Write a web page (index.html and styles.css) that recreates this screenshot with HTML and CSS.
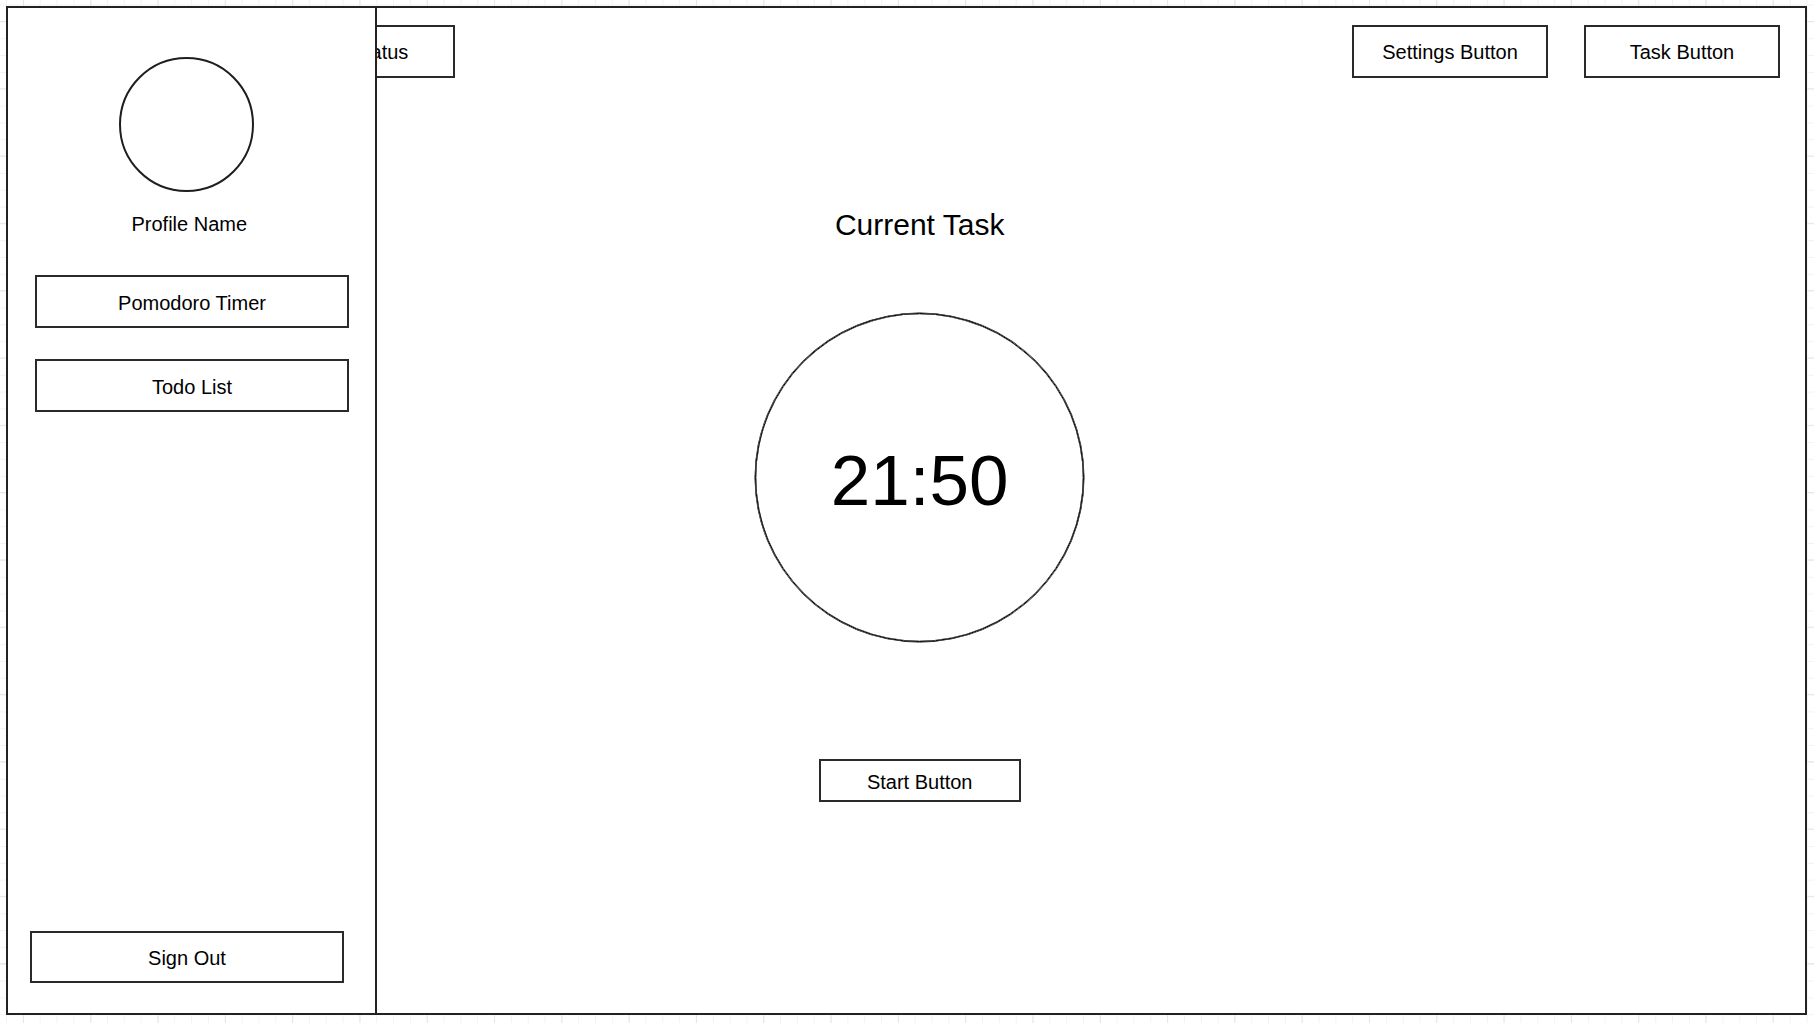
FILE: index.html
```html
<!DOCTYPE html>
<html lang="en">
<head>
<meta charset="utf-8">
<title>Pomodoro Timer</title>
<link rel="stylesheet" href="styles.css">
</head>
<body>
<div class="frame">
  <aside class="sidebar">
    <div class="avatar"></div>
    <div class="profile-name">Profile Name</div>
    <button class="box low-text nav-btn nav-first">Pomodoro Timer</button>
    <button class="box low-text nav-btn nav-second">Todo List</button>
    <button class="box low-text signout-btn">Sign Out</button>
  </aside>
  <main class="main">
    <header class="topbar">
      <button class="box top-btn status-btn">Status</button>
      <div class="spacer"></div>
      <button class="box top-btn">Settings Button</button>
      <button class="box top-btn task-btn">Task Button</button>
    </header>
    <section class="stage">
      <h1 class="task-title">Current Task</h1>
      <div class="timer"><span class="timer-text">21:50</span></div>
      <button class="box low-text start-btn">Start Button</button>
    </section>
  </main>
</div>
</body>
</html>
```

FILE: styles.css
```css
html, body {
  margin: 0;
  padding: 0;
}

body {
  width: 1814px;
  height: 1023px;
  overflow: hidden;
  font-family: "Liberation Sans", Arial, Helvetica, sans-serif;
  color: #000;
  background-color: #fff;
  background-image:
    linear-gradient(to right, #e6e6e6 1px, transparent 1px),
    linear-gradient(to bottom, #e6e6e6 1px, transparent 1px),
    linear-gradient(to right, #f2f2f2 1px, transparent 1px),
    linear-gradient(to bottom, #f2f2f2 1px, transparent 1px);
  background-size: 67.3px 67.3px, 67.3px 67.3px, 16.83px 16.83px, 16.83px 16.83px;
  background-position: 23px 0, 0 21px, 6px 0, 0 4.6px;
}

.frame {
  position: relative;
  box-sizing: border-box;
  margin: 6px 0 0 6px;
  width: 1801px;
  height: 1009px;
  border: 2px solid #222;
  background: #fff;
  display: flex;
  flex-direction: column;
}

.box {
  box-sizing: border-box;
  border: 2px solid #2a2a2a;
  background: #fff;
  font-family: "Liberation Sans", Arial, Helvetica, sans-serif;
  font-size: 20px;
  color: #000;
  padding: 0;
  display: flex;
  align-items: center;
  justify-content: center;
  border-radius: 0;
}

.low-text {
  padding-top: 4px;
}

/* Sidebar drawer overlays the main content */
.sidebar {
  position: absolute;
  top: 0;
  left: 0;
  bottom: 0;
  width: 369px;
  box-sizing: border-box;
  border-right: 2px solid #222;
  background: #fff;
  z-index: 2;
  display: flex;
  flex-direction: column;
  align-items: flex-start;
  padding-top: 49px;
}

.avatar {
  box-sizing: border-box;
  width: 135px;
  height: 135px;
  margin-left: 111px;
  border: 2px solid #1e1e1e;
  border-radius: 50%;
}

.profile-name {
  margin-top: 20.5px;
  margin-left: 123.5px;
  font-size: 20px;
  line-height: 23px;
}

.nav-btn {
  width: 314px;
  height: 53px;
  margin-left: 27px;
}

.nav-first {
  margin-top: 39.5px;
}

.nav-second {
  margin-top: 31px;
}

.signout-btn {
  width: 314px;
  height: 52.5px;
  margin-left: 22px;
  margin-top: auto;
  margin-bottom: 30px;
}

/* Main */
.main {
  flex: 1;
  display: flex;
  flex-direction: column;
}

.topbar {
  display: flex;
  align-items: flex-start;
  padding: 17px 25px 0 297px;
}

.top-btn {
  width: 196px;
  height: 52.5px;
  padding-top: 2px;
}

.status-btn {
  width: 150px;
}

.spacer {
  flex: 1;
}

.task-btn {
  margin-left: 36px;
}

.stage {
  width: 416px;
  margin-left: 703.7px;
  margin-top: 132px;
  display: flex;
  flex-direction: column;
  align-items: center;
}

.task-title {
  margin: 0;
  font-weight: normal;
  font-size: 30px;
  line-height: 30px;
}

.timer {
  box-sizing: border-box;
  margin-top: 73.7px;
  width: 329px;
  height: 329px;
  border: 1px solid #000;
  box-shadow: 0 0 0 0.5px #000, inset 0 0 0 0.3px #000;
  border-radius: 50%;
  display: flex;
  align-items: center;
  justify-content: center;
  padding-top: 5px;
}

.timer-text {
  font-size: 71px;
  line-height: 71px;
}

.start-btn {
  margin-top: 116.7px;
  width: 202px;
  height: 43px;
}
```
